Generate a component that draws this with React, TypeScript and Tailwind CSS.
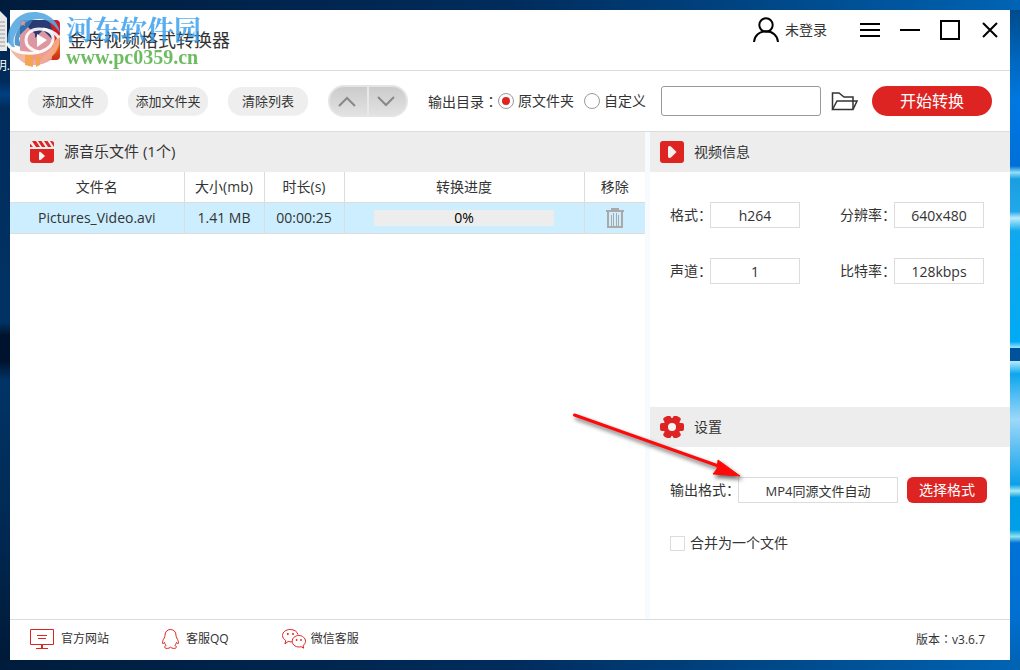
import * as React from 'react';
import { clsx } from 'clsx';

// ============================================
// Types
// ============================================

interface FileRow {
  name: string;
  size: string;
  duration: string;
  progress: number;
}

interface InfoFieldProps {
  id: string;
  label: string;
  value: string;
  wide?: boolean;
}

interface SectionHeaderProps {
  icon: React.ReactNode;
  children: React.ReactNode;
  large?: boolean;
}

// ============================================
// Data
// ============================================

const files: FileRow[] = [
  { name: 'Pictures_Video.avi', size: '1.41 MB', duration: '00:00:25', progress: 0 },
];

const listActions = ['添加文件', '添加文件夹', '清除列表'];

// ============================================
// Icons
// ============================================

function AppLogo() {
  return (
    <svg width="40" height="40" viewBox="0 0 40 40" aria-hidden="true">
      <defs>
        <linearGradient id="logo-side" x1="0" y1="0" x2="0" y2="1">
          <stop offset="0" stopColor="#c4202c" />
          <stop offset="0.4" stopColor="#cf1f22" />
          <stop offset="0.6" stopColor="#e2641a" />
          <stop offset="1" stopColor="#cf2a16" />
        </linearGradient>
      </defs>
      <rect width="40" height="40" rx="4" fill="url(#logo-side)" />
      <path d="M0 4a4 4 0 0 1 4-4h25l3 9 2 8-8 14H0z" fill="#2b3a73" />
      <path d="M40 22c-1 9-6 15-15 18H10l18-9z" fill="#e87a1e" />
    </svg>
  );
}

function WatermarkLogo() {
  return (
    <svg width="54" height="56" viewBox="0 0 54 56" aria-hidden="true">
      {/* Blue crescent */}
      <path
        d="M2 37C-1 17 10 1 28 1c14 0 24 9 26 21C48 13 41 8 33 8 20 8 11 17 8 27c-1 4 0 7 1 9z"
        fill="#58a9e2"
        fillOpacity="0.9"
      />
      <path d="M9 34C7 22 15 11 27 9l-6 9-8 9 2 9z" fill="#2f7fbd" fillOpacity="0.8" />
      {/* Raised arrow and its stems */}
      <path d="M14 24l8-8 7 7v4l8-8 9 9v20c-5 4-11 6-18 6s-10-2-14-5z" fill="#eda0a4" fillOpacity="0.92" />
      <path d="M3 36c4 8 9 13 16 15v-9C13 42 8 40 3 36z" fill="#efb9a4" />
      <path d="M19 44h8v12l-8-2zM30 44h4v10l-4 2z" fill="#f5a552" />
      <path d="M36 46c6-3 10-8 12-15l6-8c1 13-6 24-18 29z" fill="#f3a98a" fillOpacity="0.95" />
      {/* White orbit */}
      <path
        d="M1 32c5 9 15 11 27 10 10-1 18-6 19-13 1-6-4-10-10-11"
        fill="none"
        stroke="#fff"
        strokeWidth="3"
        strokeOpacity="0.9"
      />
      <path
        d="M33 41c-8-2-13-6-13-12 0-7 6-11 13-11 8 0 16 3 20 9"
        fill="none"
        stroke="#fff"
        strokeWidth="3"
        strokeOpacity="0.9"
      />
      <path d="M31 23l10 6-10 7z" fill="#fff" />
      <path d="M17 9l1 2 2 .2-1.500 1.500.5 2.300-2-1.200-2 1.200.5-2.300L14 11.200l2-.2z" fill="#e8908c" />
    </svg>
  );
}

function UserIcon() {
  return (
    <svg width="26" height="26" viewBox="0 0 26 26" fill="none" stroke="#000" strokeWidth="2" aria-hidden="true">
      <circle cx="13" cy="8" r="6.7" />
      <path d="M1 25C1.400 18.500 6.500 14.300 13 14.300S24.600 18.500 25 25" />
    </svg>
  );
}

function FolderIcon() {
  return (
    <svg width="27" height="20" viewBox="0 0 27 20" fill="none" stroke="#333" strokeWidth="1.500" aria-hidden="true">
      <path d="M1.500 18V2H8l5 4h9v12" />
      <path d="M1.500 18.500L6 10h20l-4 8.500z" />
    </svg>
  );
}

function ClapperIcon() {
  return (
    <svg width="24" height="22" viewBox="0 0 24 22" aria-hidden="true">
      <path d="M0 8h24v11a3 3 0 0 1-3 3H3a3 3 0 0 1-3-3z" fill="#de2422" />
      <path
        d="M0 2.500L3 6H0zM2 0h4l4 6H6zM8 0h3.500l4 6H12zM14 0h3.500l4 6H18zM20 0h1.500A2.500 2.500 0 0 1 24 2.500V6z"
        fill="#de2422"
      />
      <path d="M9 12.500c0-2 1-2 2.200-1L15 15l-3.800 3.500c-1.200 1-2.200 1-2.200-1z" fill="#f6f6f6" />
    </svg>
  );
}

function PlayIcon() {
  return (
    <svg width="24" height="22" viewBox="0 0 24 22" aria-hidden="true">
      <rect width="24" height="22" rx="3" fill="#de2422" />
      <path d="M8 7c0-2.500 2-2.500 3.500-1L16.500 11l-5 5C10 17.500 8 17.500 8 15z" fill="#f1f1f1" />
    </svg>
  );
}

function GearIcon() {
  return (
    <svg width="24" height="22" viewBox="0 0 24 22" aria-hidden="true">
      <g fill="#de2422">
        <circle cx="12" cy="11" r="9" />
        <rect x="0" y="7" width="24" height="8" rx="2" />
        <rect x="0" y="7" width="24" height="8" rx="2" transform="rotate(60 12 11)" />
        <rect x="0" y="7" width="24" height="8" rx="2" transform="rotate(-60 12 11)" />
      </g>
      <circle cx="12" cy="11" r="4" fill="#f6f6f6" />
    </svg>
  );
}

function TrashIcon() {
  return (
    <svg width="18" height="20" viewBox="0 0 18 20" fill="#a9a9a9" aria-hidden="true">
      <path d="M5 0h8v2h5v2H0V2h5z" />
      <path d="M1 4h2v14h12V4h2v16H1z" />
      <path d="M5 7h1v11H5zM7 5h1v13H7zM10 5h1v13h-1zM12 7h1v11h-1z" />
    </svg>
  );
}

function MonitorIcon() {
  return (
    <svg width="24" height="20" viewBox="0 0 24 20" fill="none" stroke="#de2422" aria-hidden="true">
      <path d="M0.500 0.500h23v15H0.500z" />
      <path d="M7 6.500h10M8 9.500h8" />
      <path d="M12 16v3" strokeWidth="2" />
      <path d="M6 19.500h12" />
    </svg>
  );
}

function QQIcon() {
  return (
    <svg width="17" height="20" viewBox="0 0 17 20" fill="none" stroke="#de2422" aria-hidden="true">
      <path d="M8.500 0.500C5.300 0.500 3 2.800 3 6.200c0 1-.3 1.800-.8 2.800C1 11 .5 12.500.6 14c0 1.200.9 1 1.900-.6.4 1.500 1 2.300 1.700 3-1.400.6-1.700 1.300-1.400 2.200.5 1.200 4.300 1.100 5.700-.4 1.400 1.500 5.200 1.600 5.700.4.3-.9 0-1.600-1.400-2.200.7-.7 1.300-1.500 1.700-3 1 1.600 1.900 1.800 1.900.6.1-1.500-.4-3-1.600-5-.5-1-.8-1.800-.8-2.800 0-3.400-2.300-5.700-5.500-5.700z" />
    </svg>
  );
}

function WechatIcon() {
  return (
    <svg width="24" height="20" viewBox="0 0 24 20" fill="none" stroke="#de2422" aria-hidden="true">
      <path d="M10 12.800c-1.600.1-2.700 0-3.800-.4L3 15l.7-3.600C1.700 10.200.5 8.500.5 6.500.5 3 4 .5 8.300.5c3.800 0 7 2 7.700 5.200" />
      <path d="M16.800 6.500c3.700 0 6.700 2.600 6.700 5.700 0 1.900-1 3.400-2.400 4.400l.5 2.600-2.400-1.500c-4.600 1.200-9-1.500-9-5.500 0-3.100 2.900-5.700 6.600-5.700z" />
      <g fill="#de2422" stroke="none">
        <circle cx="5.800" cy="5" r="1" />
        <circle cx="11" cy="5" r="1" />
        <circle cx="14.600" cy="11" r="0.900" />
        <circle cx="19" cy="11" r="0.900" />
      </g>
    </svg>
  );
}

function PointerArrow() {
  return (
    <svg width="176" height="76" viewBox="0 0 176 76" aria-hidden="true" className="drop-shadow-[2px_3px_2px_rgba(0,0,0,0.6)]">
      <path d="M3.500 5L146 55.500" stroke="#ff0a0a" strokeWidth="3" strokeLinecap="round" />
      <path d="M147 50l22 16-27-2 4-5z" fill="#ff0a0a" stroke="#ff0a0a" strokeWidth="1" />
    </svg>
  );
}

// ============================================
// Building Blocks
// ============================================

function SectionHeader({ icon, children, large }: SectionHeaderProps) {
  return (
    <h2 className={clsx('flex h-10 items-center gap-2.5 bg-[#ededed]', large ? 'px-5 text-[15px]' : 'px-2.5 text-sm')}>
      {icon}
      <span>{children}</span>
    </h2>
  );
}

function InfoField({ id, label, value, wide }: InfoFieldProps) {
  return (
    <div className="flex items-center">
      <label htmlFor={id} className={clsx('whitespace-nowrap', wide ? 'w-[54px]' : 'w-10')}>
        {label}：
      </label>
      <input
        id={id}
        readOnly
        defaultValue={value}
        className="h-[26px] w-[90px] border border-[#dcdcdc] bg-white text-center outline-none"
      />
    </div>
  );
}

// Full-width colon centred in its cell
function Colon() {
  return <span className="[font-family:'Noto_Sans_CJK_TC',sans-serif]" lang="zh-TW">：</span>;
}

const radioClass =
  'size-4 appearance-none rounded-full border border-[#999] bg-clip-content p-[3px] checked:bg-[#de2422]';

// ============================================
// Window Sections
// ============================================

function TitleBar() {
  return (
    <header className="relative flex h-[61px] justify-between border-b border-[#dcdcdc] pl-2.5">
      <div className="flex items-center gap-2">
        <AppLogo />
        <h1 className="text-lg">金舟视频格式转换器</h1>
      </div>

      <div className="flex h-10 items-center">
        <button type="button" className="mr-[23px] flex items-center gap-1.5">
          <UserIcon />
          未登录
        </button>
        <button type="button" aria-label="菜单" className="flex size-10 items-center justify-center">
          <svg width="20" height="14" viewBox="0 0 20 14" aria-hidden="true">
            <path d="M0 0h20v2H0zM0 6h20v2H0zM0 12h20v2H0z" />
          </svg>
        </button>
        <button type="button" aria-label="最小化" className="flex size-10 items-center justify-center">
          <svg width="20" height="2" viewBox="0 0 20 2" aria-hidden="true">
            <path d="M0 0h20v2H0z" />
          </svg>
        </button>
        <button type="button" aria-label="最大化" className="flex size-10 items-center justify-center">
          <svg width="20" height="20" viewBox="0 0 20 20" fill="none" stroke="#000" strokeWidth="2" aria-hidden="true">
            <path d="M1 1h18v18H1z" />
          </svg>
        </button>
        <button type="button" aria-label="关闭" className="flex size-10 items-center justify-center">
          <svg width="16" height="16" viewBox="0 0 16 16" stroke="#000" strokeWidth="2" aria-hidden="true">
            <path d="M1 1l14 14M15 1L1 15" />
          </svg>
        </button>
      </div>

      {/* Site stamp laid over the title */}
      <div className="pointer-events-none absolute -left-1 top-px flex gap-1.5">
        <WatermarkLogo />
        <div className="flex flex-col font-bold">
          <span className="text-[27px] leading-9 text-[#2f9bee] opacity-80 [font-family:'Noto_Serif_CJK_SC','Noto_Sans_CJK_SC',serif]">
            河东软件园
          </span>
          <span className="text-xl leading-5 text-[#5fb552] opacity-90 [font-family:'Liberation_Serif',serif]">
            www.pc0359.cn
          </span>
        </div>
      </div>
    </header>
  );
}

function Toolbar() {
  return (
    <div className="flex h-[61px] items-center border-b border-[#dcdcdc] px-[18px]">
      <div className="flex items-center gap-5">
        {listActions.map((action) => (
          <button
            key={action}
            type="button"
            className="h-7 w-20 rounded-full bg-[#eeeeee] text-[13px] shadow-[0_1px_1px_rgba(0,0,0,0.06)]"
          >
            {action}
          </button>
        ))}
        <div className="flex h-8 w-20 divide-x-2 divide-[#e8e8e8] overflow-hidden rounded-full border-2 border-[#e4e4e4] bg-linear-to-b from-[#cbcbcb] to-[#e2e2e2]">
          <button type="button" aria-label="上移" className="flex flex-1 items-center justify-center pr-1">
            <svg width="18" height="11" viewBox="0 0 18 11" fill="none" stroke="#888" strokeWidth="2" aria-hidden="true">
              <path d="M1 10l8-8 8 8" />
            </svg>
          </button>
          <button type="button" aria-label="下移" className="flex flex-1 items-center justify-center pr-1">
            <svg width="18" height="11" viewBox="0 0 18 11" fill="none" stroke="#888" strokeWidth="2" aria-hidden="true">
              <path d="M1 1l8 8 8-8" />
            </svg>
          </button>
        </div>
      </div>

      <fieldset className="ml-5 flex items-center">
        <legend className="float-left w-[70px] whitespace-nowrap">
          输出目录<Colon />
        </legend>
        <label className="flex items-center gap-1">
          <input type="radio" name="output-dir" defaultChecked className={radioClass} />
          原文件夹
        </label>
        <label className="ml-2.5 flex items-center gap-1">
          <input type="radio" name="output-dir" className={radioClass} />
          自定义
        </label>
      </fieldset>

      <input
        type="text"
        aria-label="自定义目录"
        className="ml-[15px] h-[30px] min-w-0 flex-1 rounded-[3px] border border-[#999] bg-white px-2 outline-none"
      />
      <button type="button" aria-label="浏览" className="ml-2.5">
        <FolderIcon />
      </button>
      <button type="button" className="ml-3.5 h-[30px] w-[120px] rounded-full bg-[#de2422] text-base text-white">
        开始转换
      </button>
    </div>
  );
}

function FileTable() {
  return (
    <section className="min-w-0 flex-1">
      <SectionHeader icon={<ClapperIcon />} large>
        源音乐文件 ({files.length}个)
      </SectionHeader>
      <table className="w-full table-fixed border-collapse text-center">
        <colgroup>
          <col />
          <col className="w-20" />
          <col className="w-20" />
          <col className="w-[240px]" />
          <col className="w-[61px]" />
        </colgroup>
        <thead>
          <tr className="h-[30px] divide-x divide-[#dcdcdc] border-b border-[#dcdcdc]">
            <th className="font-normal">文件名</th>
            <th className="font-normal">大小(mb)</th>
            <th className="font-normal">时长(s)</th>
            <th className="font-normal">转换进度</th>
            <th className="font-normal">移除</th>
          </tr>
        </thead>
        <tbody>
          {files.map((file) => (
            <tr key={file.name} className="h-[31px] divide-x divide-[#dcdcdc] border-b border-[#dcdcdc] bg-[#cceeff]">
              <td>{file.name}</td>
              <td>{file.size}</td>
              <td>{file.duration}</td>
              <td>
                <div
                  role="progressbar"
                  aria-label={file.name}
                  aria-valuenow={file.progress}
                  className="mx-auto h-4 w-[180px] bg-[#ededed] text-sm leading-4 text-black"
                >
                  {file.progress}%
                </div>
              </td>
              <td>
                <button type="button" aria-label="移除" className="block w-full">
                  <span className="flex justify-center">
                    <TrashIcon />
                  </span>
                </button>
              </td>
            </tr>
          ))}
        </tbody>
      </table>
    </section>
  );
}

function SidePanel() {
  return (
    <aside className="w-[360px] shrink-0">
      <section>
        <SectionHeader icon={<PlayIcon />}>视频信息</SectionHeader>
        <div className="min-h-[235px] px-5 pt-[30px]">
          <div className="grid grid-cols-[max-content_max-content] gap-x-10 gap-y-[30px]">
            <InfoField id="format" label="格式" value="h264" />
            <InfoField id="resolution" label="分辨率" value="640x480" wide />
            <InfoField id="channels" label="声道" value="1" />
            <InfoField id="bitrate" label="比特率" value="128kbps" wide />
          </div>
        </div>
      </section>

      <section>
        <SectionHeader icon={<GearIcon />}>设置</SectionHeader>
        <div className="flex flex-col gap-[30px] px-5 pt-[30px]">
          <div className="relative flex items-center">
            <label htmlFor="output-format" className="w-[68px] whitespace-nowrap">
              输出格式：
            </label>
            <input
              id="output-format"
              readOnly
              defaultValue="MP4同源文件自动"
              className="h-[26px] w-40 border border-[#dcdcdc] bg-white text-center text-[13px] outline-none"
            />
            <button type="button" className="ml-[9px] h-[26px] w-20 rounded-md bg-[#de2422] text-white">
              选择格式
            </button>
            <div className="pointer-events-none absolute -left-[99px] -top-[67px]">
              <PointerArrow />
            </div>
          </div>
          <label className="flex items-center gap-[5px]">
            <input
              type="checkbox"
              className="size-[15px] appearance-none border border-[#dcdcdc] bg-white checked:bg-[#de2422]"
            />
            合并为一个文件
          </label>
        </div>
      </section>
    </aside>
  );
}

function StatusBar() {
  return (
    <footer className="flex h-[41px] items-center justify-between border-t border-[#dcdcdc] pb-0.5 pl-5 pr-[25px] text-xs">
      <nav className="flex gap-[53px]">
        <a href="#site" className="flex items-center gap-[7px]">
          <MonitorIcon />
          官方网站
        </a>
        <a href="#qq" className="flex items-center gap-[7px]">
          <QQIcon />
          客服QQ
        </a>
        <a href="#wechat" className="flex items-center gap-[5px]">
          <WechatIcon />
          微信客服
        </a>
      </nav>
      <span>
        版本<Colon />v3.6.7
      </span>
    </footer>
  );
}

// ============================================
// Desktop
// ============================================

function DesktopLeft() {
  return (
    <div className="flex w-2.5 shrink-0 flex-col overflow-hidden bg-[linear-gradient(to_bottom,#00224a_0%,#002c5c_11%,#004080_13%,#002c5c_15%,#003364_48%,#00132e_50%,#00132e_54%,#003466_57%,#002a54_78%,#001a38_100%)]">
      <svg width="8" height="42" viewBox="0 0 8 42" aria-hidden="true">
        <path d="M0 1l7 7v33H0z" fill="#e8e8e8" />
        <path d="M0 12h5M0 16h5M0 20h5M0 24h5M0 28h5M0 32h5M0 36h5" stroke="#9a9a9a" />
      </svg>
      <span className="mt-1.5 flex justify-end whitespace-nowrap text-xs leading-4 text-white">明.</span>
    </div>
  );
}

export default function App() {
  return (
    <div
      lang="zh-CN"
      className="flex min-h-screen bg-linear-to-r from-[#001c3c] via-[#002c5c] to-[#0064b4] py-2.5 text-sm text-[#333] [font-family:'Open_Sans','Noto_Sans_CJK_SC',sans-serif]"
    >
      <DesktopLeft />
      <div className="flex min-w-0 flex-1 flex-col bg-white">
        <TitleBar />
        <Toolbar />
        <main className="flex flex-1">
          <FileTable />
          <div className="w-[5px] shrink-0 bg-[#f7fbff]" />
          <SidePanel />
        </main>
        <StatusBar />
      </div>
      <div className="w-2.5 shrink-0 bg-[linear-gradient(to_bottom,#004a8c_0%,#0068c0_8%,#0078e0_14%,#0070d8_24%,#8fe0f4_25%,#1a9ee0_26%,#22a8ea_31%,#b8ecfa_32%,#10a8ee_34%,#00aaf4_51%,#a0e8f8_52%,#00529c_52%,#00529c_54%,#b8ecfa_54%,#0ca6ee_56%,#9cd8f8_63%,#0ca0ea_73%,#a8eaf0_74%,#009ce8_75%,#00a0e8_80%,#8ce4ee_81%,#0072d8_82%,#0070d0_93%,#0064b8_100%)]" />
    </div>
  );
}
